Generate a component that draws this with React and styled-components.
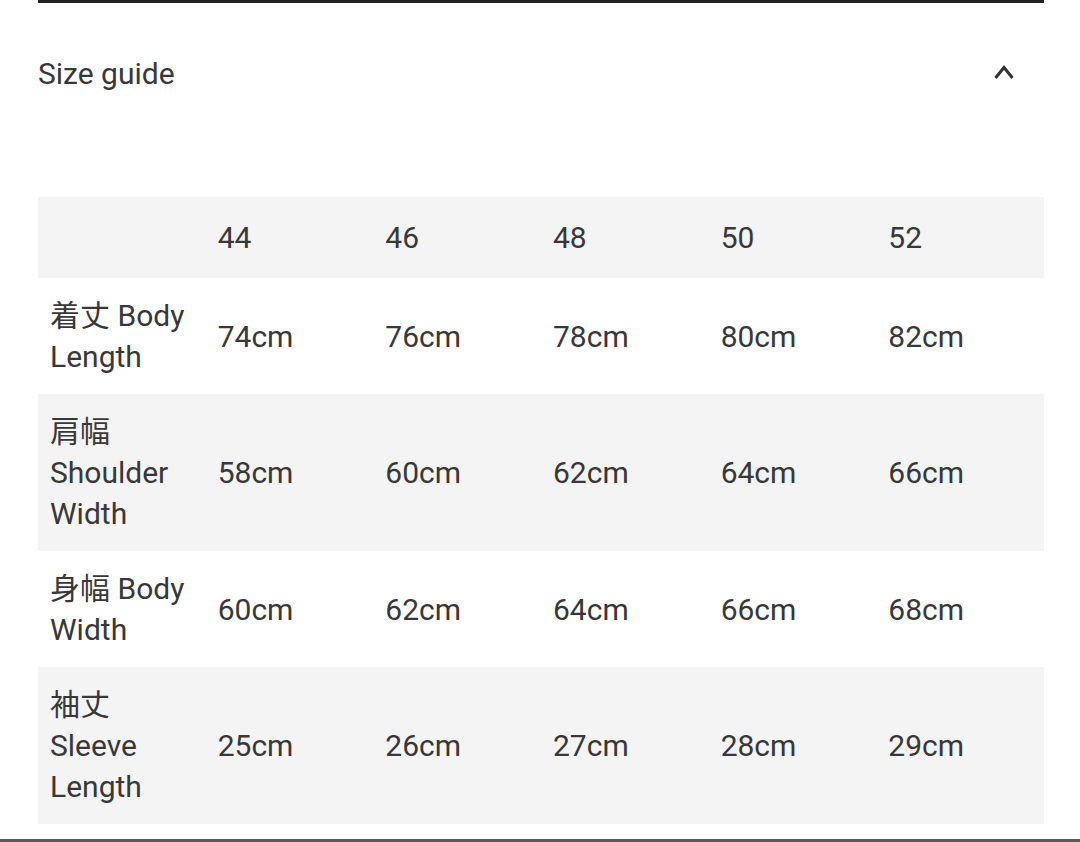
import React from "react"
import styled, { createGlobalStyle } from "styled-components"

const Global = createGlobalStyle`
    body {
        margin: 0;
        background: #fff;
        font-family: Roboto, "Noto Sans CJK JP", sans-serif;
        color: #383838;
    }
`

const Pagina = styled.div`
    width: 1080px;
    height: 842px;
    overflow: hidden;
`

const Secao = styled.section`
    margin: 0 36px 0 38px;
    border-top: 3px solid #222;
`

const Cabecalho = styled.div`
    display: flex;
    align-items: center;
    justify-content: space-between;
    padding: 50px 29px 0 0;
    height: 41px;
`

const Titulo = styled.h2`
    margin: 0;
    font-size: 30px;
    font-weight: 400;
    line-height: 41px;
    color: #383838;
`

const Seta = styled.svg`
    display: block;
    margin-top: -4px;
`

const Tabela = styled.table`
    width: 100%;
    margin-top: 103px;
    border-collapse: collapse;
    table-layout: fixed;
    font-size: 30px;
    line-height: 41px;
`

const Linha = styled.tr`
    background: ${props => props.cinza ? "#f4f4f4" : "#fff"};
`

const Celula = styled.td`
    padding: ${props => props.topo ? "20px" : "17px"} 12px;
    vertical-align: middle;
    text-align: left;
    font-weight: 400;
    color: #383838;
`

const Rodape = styled.div`
    margin-top: 15px;
    border-top: 3px solid #5a5a5a;
`

const tamanhos = ["44", "46", "48", "50", "52"]

const medidas = [
    { rotulo: "着丈 Body Length", valores: ["74cm", "76cm", "78cm", "80cm", "82cm"] },
    { rotulo: "肩幅 Shoulder Width", valores: ["58cm", "60cm", "62cm", "64cm", "66cm"] },
    { rotulo: "身幅 Body Width", valores: ["60cm", "62cm", "64cm", "66cm", "68cm"] },
    { rotulo: "袖丈 Sleeve Length", valores: ["25cm", "26cm", "27cm", "28cm", "29cm"] },
]

export default function App() {
    return <Pagina>
        <Global />

        <Secao>
            <Cabecalho>
                <Titulo>Size guide</Titulo>
                <Seta width="22" height="16" viewBox="0 0 22 16">
                    <polyline points="2.5,14 11,3.5 19.5,14" fill="none" stroke="#333" strokeWidth="3" />
                </Seta>
            </Cabecalho>

            <Tabela>
                <tbody>
                    <Linha cinza>
                        <Celula topo></Celula>
                        { tamanhos.map(t => <Celula topo key={ t }>{ t }</Celula>) }
                    </Linha>

                    { medidas.map((m, i) =>
                        <Linha key={ m.rotulo } cinza={ i % 2 === 1 }>
                            <Celula>{ m.rotulo }</Celula>
                            { m.valores.map(v => <Celula key={ v }>{ v }</Celula>) }
                        </Linha>
                    ) }
                </tbody>
            </Tabela>
        </Secao>

        <Rodape />
    </Pagina>
}
